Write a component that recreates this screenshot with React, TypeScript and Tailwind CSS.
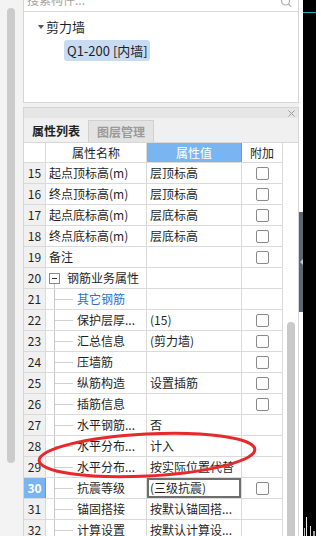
import React from 'react';

type R = {
  n: number;
  name: string;
  value?: string;
  cb?: boolean;
  kind: 'top' | 'group' | 'child';
  blue?: boolean;
  active?: boolean;
};

const rows: R[] = [
  { n: 15, name: '起点顶标高(m)', value: '层顶标高', cb: true, kind: 'top' },
  { n: 16, name: '终点顶标高(m)', value: '层顶标高', cb: true, kind: 'top' },
  { n: 17, name: '起点底标高(m)', value: '层底标高', cb: true, kind: 'top' },
  { n: 18, name: '终点底标高(m)', value: '层底标高', cb: true, kind: 'top' },
  { n: 19, name: '备注', cb: true, kind: 'top' },
  { n: 20, name: '钢筋业务属性', kind: 'group' },
  { n: 21, name: '其它钢筋', kind: 'child', blue: true },
  { n: 22, name: '保护层厚...', value: '(15)', cb: true, kind: 'child' },
  { n: 23, name: '汇总信息', value: '(剪力墙)', cb: true, kind: 'child' },
  { n: 24, name: '压墙筋', cb: true, kind: 'child' },
  { n: 25, name: '纵筋构造', value: '设置插筋', cb: true, kind: 'child' },
  { n: 26, name: '插筋信息', cb: true, kind: 'child' },
  { n: 27, name: '水平钢筋...', value: '否', kind: 'child' },
  { n: 28, name: '水平分布...', value: '计入', kind: 'child' },
  { n: 29, name: '水平分布...', value: '按实际位置代替', kind: 'child' },
  { n: 30, name: '抗震等级', value: '(三级抗震)', cb: true, kind: 'child', active: true },
  { n: 31, name: '锚固搭接', value: '按默认锚固搭...', kind: 'child' },
  { n: 32, name: '计算设置', value: '按默认计算设...', kind: 'child' },
];

function Checkbox() {
  return <div className="w-[13px] h-[13px] border border-[#8a8a8a] rounded-[2px] bg-white" />;
}

function Row({ r }: { r: R }) {
  return (
    <div className="h-[21px] flex border-b border-[#dadada]">
      <div
        className={
          r.active
            ? 'w-[22px] shrink-0 border-r border-[#5a9de6] bg-[#7ab5f2] text-white font-bold flex items-center justify-center'
            : 'w-[22px] shrink-0 border-r border-[#dadada] bg-[#f0f0f0] flex items-center justify-center'
        }
      >
        {r.n}
      </div>
      <div className="w-[101px] shrink-0 border-r border-[#dadada] flex items-stretch overflow-hidden whitespace-nowrap">
        {r.kind === 'top' && <div className="pl-[3px] flex items-center">{r.name}</div>}
        {r.kind === 'group' && (
          <div className="pl-[3px] flex items-stretch">
            <div className="w-[11px] flex flex-col items-center">
              <div className="flex-1" />
              <div className="w-[11px] h-[11px] border border-[#8a8a8a] bg-white flex items-center justify-center">
                <div className="w-[5px] h-px bg-[#333]" />
              </div>
              <div className="flex-1 w-px bg-[#c8c8c8]" />
            </div>
            <div className="ml-[7px] flex items-center">{r.name}</div>
          </div>
        )}
        {r.kind === 'child' && (
          <div className="pl-[8px] flex items-stretch">
            <div className="w-[19px] border-l border-[#c8c8c8] flex items-center">
              <div className="w-[18px] h-px bg-[#d0d0d0]" />
            </div>
            <div className={r.blue ? 'ml-[4px] flex items-center text-[#2a6fd8]' : 'ml-[4px] flex items-center'}>
              {r.name}
            </div>
          </div>
        )}
      </div>
      <div
        className={
          r.active
            ? 'w-[95px] shrink-0 border-r border-[#dadada] pl-[3px] flex items-center whitespace-nowrap overflow-hidden shadow-[inset_0_0_0_2px_#6e6e6e]'
            : 'w-[95px] shrink-0 border-r border-[#dadada] pl-[3px] flex items-center whitespace-nowrap overflow-visible'
        }
      >
        {r.value}
      </div>
      <div className="w-[41px] shrink-0 border-r border-[#dadada] flex items-center justify-center">
        {r.cb && <Checkbox />}
      </div>
    </div>
  );
}

export default function App() {
  return (
    <div className="relative w-[316px] h-[536px] overflow-hidden flex bg-[#f0f0f0] font-['Noto_Sans_CJK_SC','Noto_Sans',sans-serif] text-[12px] text-[#1f1f1f]">
      {/* left scroll strip */}
      <div className="w-[23px] shrink-0 pl-[7px] pt-[8px] bg-[#f3f3f3]">
        <div className="w-[8px] h-[455px] rounded-[4px] bg-[#cbcbcb]" />
      </div>

      {/* main column */}
      <div className="w-[276px] shrink-0 flex flex-col">
        {/* top panel */}
        <div className="mt-[-12px] h-[115px] shrink-0 border border-[#d5d5d5] bg-white flex flex-col">
          <div className="h-[23px] shrink-0 border-b border-[#d8d8d8] flex items-center justify-between pl-[3px] pr-[6px]">
            <span className="text-[#a3a3a3]">搜索构件...</span>
            <svg width="12" height="12" viewBox="0 0 12 12" className="mt-[4px]">
              <circle cx="5.5" cy="5" r="4" fill="none" stroke="#b0b0b0" strokeWidth="1.2" />
              <line x1="8.4" y1="8" x2="11" y2="10.6" stroke="#b0b0b0" strokeWidth="1.3" />
            </svg>
          </div>
          <div className="flex-1 pt-[7px] text-[13px]">
            <div className="h-[16px] flex items-center pl-[14px]">
              <svg width="6" height="4" viewBox="0 0 6 4">
                <path d="M0 0 L6 0 L3 4 Z" fill="#555" />
              </svg>
              <span className="ml-[2px]">剪力墙</span>
            </div>
            <div className="mt-[5px] ml-[40px] w-[86px] h-[21px] rounded-[3px] bg-[#c7dcf3] flex items-center pl-[3px] whitespace-nowrap">
              Q1-200 [内墙]
            </div>
          </div>
        </div>

        <div className="h-[4px] shrink-0" />

        {/* bottom panel */}
        <div className="flex-1 border-x border-[#d5d5d5] flex flex-col bg-white min-h-0">
          <div className="h-[11px] shrink-0 border-t border-[#d5d5d5] bg-[#e6e6e6] flex items-center justify-end pr-[3px]">
            <svg width="7" height="7" viewBox="0 0 7 7">
              <path d="M0.5 0.5 L6.5 6.5 M6.5 0.5 L0.5 6.5" stroke="#9a9a9a" strokeWidth="1" />
            </svg>
          </div>
          <div className="h-[24px] shrink-0 bg-[#f0f0f0] flex items-end">
            <div className="w-[64px] h-[24px] flex items-center justify-center pt-[2px] font-bold text-[#222]">
              属性列表
            </div>
            <div className="w-[66px] h-[22px] border border-b-0 border-[#d0d0d0] bg-[#e3e3e3] flex items-center justify-center text-[#9a9a9a] font-bold">
              图层管理
            </div>
          </div>
          <div className="flex-1 flex border-t border-[#d8d8d8] min-h-0">
            <div className="w-[259px] shrink-0">
              <div className="h-[20px] flex border-b border-[#dadada]">
                <div className="w-[22px] shrink-0 border-r border-[#dadada] bg-white" />
                <div className="w-[101px] shrink-0 border-r border-[#dadada] flex items-center justify-center">
                  属性名称
                </div>
                <div className="w-[95px] shrink-0 border-r border-[#5a9de6] bg-[#7ab5f2] text-white flex items-center justify-center">
                  属性值
                </div>
                <div className="w-[41px] shrink-0 border-r border-[#dadada] flex items-center justify-center">
                  附加
                </div>
              </div>
              {rows.map((r) => (
                <Row key={r.n} r={r} />
              ))}
            </div>
            <div className="w-[15px] shrink-0 bg-white pt-[179px] pl-[4px] flex flex-col">
              <div className="w-[8px] flex-1 rounded-t-[4px] bg-[#c9c9c9]" />
            </div>
          </div>
        </div>
      </div>

      {/* thin right strip */}
      <div className="w-[4px] shrink-0 flex flex-col bg-white">
        <div className="h-[212px]" />
        <div className="h-[100px] bg-[#5c6670] flex items-center justify-start pl-[1px]">
          <svg width="3" height="6" viewBox="0 0 3 6">
            <path d="M3 0 L0 3 L3 6 Z" fill="#c4c8cc" />
          </svg>
        </div>
        <div className="flex-1" />
      </div>

      {/* black area */}
      <div className="w-[13px] shrink-0 bg-black flex flex-col">
        <div className="mt-[12px] h-px bg-[#1cb2ba]" />
        <div className="flex-1" />
        <svg width="13" height="22" viewBox="0 0 13 22">
          <path d="M3.5 3 L3.5 22" stroke="#e8e8e8" strokeWidth="1" />
          <path d="M1.5 14 L1.5 22" stroke="#bdbdbd" strokeWidth="1" />
          <path d="M7.5 12 L7.5 22" stroke="#dcdcdc" strokeWidth="1" />
          <path d="M11 17 L11 22" stroke="#cfcfcf" strokeWidth="1.5" />
        </svg>
      </div>

      {/* red annotation ellipse */}
      <svg className="absolute left-0 top-0 pointer-events-none" width="316" height="536">
        <ellipse
          cx="147"
          cy="455"
          rx="108"
          ry="21"
          transform="rotate(-3 147 455)"
          fill="none"
          stroke="#e8282b"
          strokeWidth="3"
        />
      </svg>
    </div>
  );
}
